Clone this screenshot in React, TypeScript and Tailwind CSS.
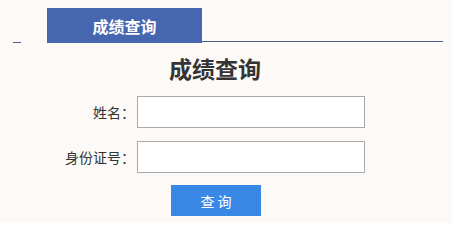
import React from "react";

export default function App() {
  return (
    <div
      className="w-[452px] h-[223px] bg-[#fcf9f7] pt-[8px] overflow-hidden"
      style={{ fontFamily: '"Noto Sans CJK SC", "Noto Sans", sans-serif' }}
    >
      <div className="ml-[13px] w-[430px] flex items-end h-[35px]">
        <div className="w-[8px] h-px bg-[#4a5f94]" />
        <div className="w-[26px]" />
        <div className="w-[155px] h-[35px] bg-[#4666b0] flex items-center justify-center text-white font-bold text-[16px] leading-none">
          成绩查询
        </div>
        <div className="flex-1 h-px bg-[#4a5f94] mb-px" />
      </div>
      <div className="mt-[10px] h-[30px] pr-[22px] text-center text-[23px] leading-[30px] font-bold text-[#333333]">
        成绩查询
      </div>
      <div className="mt-[13px] flex items-center">
        <div className="w-[137px] pr-[2px] text-right text-[14px] text-[#333333]">姓名：</div>
        <div className="w-[228px] h-[32px] border border-[#a9a9a9] bg-white" />
      </div>
      <div className="mt-[13px] flex items-center">
        <div className="w-[137px] pr-[2px] text-right text-[14px] text-[#333333]">身份证号：</div>
        <div className="w-[228px] h-[32px] border border-[#a9a9a9] bg-white" />
      </div>
      <div className="mt-[12px] ml-[171px] w-[90px] h-[31px] bg-[#3a88e6] flex items-center justify-center text-white text-[14px] leading-none">
        查&nbsp;询
      </div>
    </div>
  );
}
